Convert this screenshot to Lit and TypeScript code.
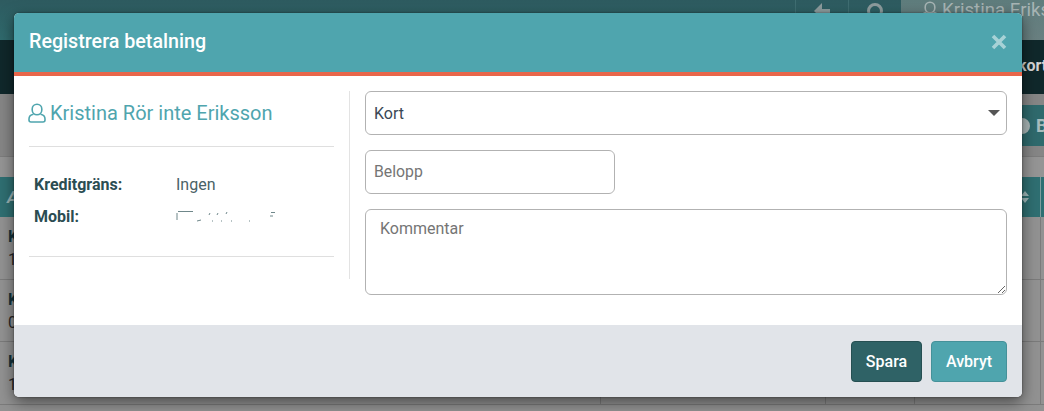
import { LitElement, html, css } from "lit";
import { customElement } from "lit/decorators.js";

@customElement("app-root")
export class AppRoot extends LitElement {
  static styles = css`
    :host {
      display: block;
      width: 1044px;
      height: 411px;
      overflow: hidden;
      position: relative;
      font-family: Roboto, "Liberation Sans", sans-serif;
      background: #929292;
    }
    .page { display: flex; flex-direction: column; height: 411px; }
    .topbar {
      height: 40px;
      background: linear-gradient(180deg, #2e5b60, #2f6a6d);
      display: flex;
      justify-content: flex-end;
      flex: none;
    }
    .topcell { width: 52px; border-left: 1px solid #3f6e72; display: flex; justify-content: center; color: #8d9c9d; padding-top: 2px; }
    .user {
      width: 123px; background: linear-gradient(180deg, #5f7d7d, #6a8081); color: #a8b5b5; font-size: 18.6px; white-space: nowrap;
      overflow: hidden; padding: 0 0 0 20px; display: flex; gap: 3px; align-items: flex-start; line-height: 20px;
    }
    .user svg { flex: none; margin-top: 1px; }
    .darkbar {
      height: 54px; flex: none; background: #10282b; color: #d4d4d4; box-sizing: border-box;
      font-size: 16px; font-weight: 700; padding-left: 1018px; white-space: nowrap; overflow: hidden; line-height: 52px;
    }
    .toolbar { height: 63px; flex: none; background: #868686; padding: 11px 0 0 1007px; box-sizing: border-box; border-bottom: 1px solid #7d7d7d; overflow: hidden; }
    .tool {
      width: 60px; height: 41px; background: #2f6a6d; color: #a8bcbd; font-weight: 700; font-size: 18px;
      display: flex; align-items: center; gap: 6px; padding-left: 7px; box-sizing: border-box;
    }
    .dot { width: 16px; height: 16px; border-radius: 50%; background: #a9b6b6; flex: none; }
    .band { height: 20px; flex: none; background: #959595; }
    .thead {
      height: 40px; flex: none; background: #2f6f72; color: #9ab2b3; font-weight: 700; font-size: 17px;
      font-style: italic; padding-left: 7px; line-height: 40px; box-sizing: border-box; position: relative;
    }
    .sort { position: absolute; left: 1020px; top: 13px; display: block; }
    .vline { position: absolute; left: 1040px; top: 0; bottom: 0; width: 1px; background: #7f9d9e; }
    .rows { flex: 1; background: #929292; }
    .row {
      height: 62.7px; border-bottom: 1px solid #7b7b7b; box-sizing: border-box; color: #262626;
      font-size: 16px; line-height: 23px; display: grid; grid-template-columns: 600px 225px 89px 126px 1fr;
    }
    .row > div { border-left: 1px solid #7b7b7b; }
    .row > div:first-child { border-left: none; padding: 8px 8px 0; }
    .row b { display: block; color: #14323a; }

    .modal {
      position: absolute;
      left: 14px;
      top: 13px;
      width: 1008px;
      height: 384px;
      border-radius: 5px;
      overflow: hidden;
      background: #fff;
      box-shadow: 0 5px 15px rgba(0, 0, 0, 0.5), 0 0 2px rgba(0, 0, 0, 0.5);
      display: flex;
      flex-direction: column;
    }
    .mhead {
      flex: none;
      background: #4fa5ae;
      border-bottom: 4px solid #e8664a;
      display: flex;
      align-items: center;
      justify-content: space-between;
      padding: 0 15px;
      color: #fff;
      box-sizing: border-box;
      height: 63px;
    }
    .title { font-size: 19.7px; font-weight: 500; line-height: 20px; margin-top: -2px; }
    .close { width: 16px; height: 16px; display: block; margin-top: -2px; opacity: 0.5; }
    .mbody { flex: 1; display: flex; padding: 15px 15px 0; min-height: 0; }
    .left { width: 321px; flex: none; height: 188px; border-right: 1px solid #e3e3e3; box-sizing: border-box; padding-right: 15px; }
    .name {
      color: #4fa5ae; font-size: 20px; line-height: 22px; padding-top: 11px; height: 22px; padding-bottom: 22px;
      display: flex; align-items: center; gap: 4px; border-bottom: 1px solid #dfdfdf; box-sizing: content-box;
    }
    .name svg { margin-left: -1px; flex: none; }
    .info {
      display: grid; grid-template-columns: 142px 1fr; row-gap: 12px; padding: 28px 5px 29px;
      border-bottom: 1px solid #dfdfdf; font-size: 16px; line-height: 20px; color: #4a6266;
    }
    .info b { color: #2b4d52; font-weight: 700; }
    .blur { display: flex; align-items: center; }
    .right { flex: 1; padding-left: 15px; display: flex; flex-direction: column; }
    .field {
      box-sizing: border-box; border: 1px solid #b2b2b2; border-radius: 6px; background: #fff;
      font-family: inherit; font-size: 16px;
    }
    .select { height: 44px; display: flex; align-items: center; justify-content: space-between; padding: 0 6px 0 8px; color: #3a4756; }
    .caret { width: 12px; height: 6px; display: block; }
    .amount { width: 250px; height: 44px; margin-top: 15px; padding: 0 8px 2px; font-size: 15.8px; color: #2b3a4a; outline: none; display: block; }
    .comment { width: 642px; height: 86px; margin-top: 15px; padding: 9px 14px; display: block; outline: none; resize: both; font-size: 16px; line-height: 20px; }
    .amount::placeholder, .comment::placeholder { color: #757575; opacity: 1; }
    .mfoot { height: 72px; flex: none; background: #e1e4e9; display: flex; justify-content: flex-end; align-items: center; gap: 9px; padding: 0 15px 0 0; }
    .btn {
      box-sizing: border-box; height: 41px; border-radius: 4px; color: #fff; font-family: inherit;
      font-size: 16px; font-weight: 500; display: flex; align-items: center; justify-content: center;
      border: 1px solid; padding: 0; margin-top: 1px;
    }
    .save { width: 71px; background: #2f6266; border-color: #264f52; }
    .cancel { width: 76px; background: #4fa5ae; border-color: #459199; }
  `;

  private row(k: string, n: string) {
    return html`<div class="row"><div><b>${k}</b>${n}</div><div></div><div></div><div></div><div></div></div>`;
  }

  render() {
    return html`
      <div class="page">
        <div class="topbar">
          <div class="topcell">
            <svg width="16" height="18" viewBox="0 0 16 18"><path d="M8 1 L0 9 L8 17 V12 H16 V7 H8 Z" fill="currentColor"></path></svg>
          </div>
          <div class="topcell">
            <svg width="18" height="18" viewBox="0 0 18 18"><circle cx="9" cy="9" r="6.5" fill="none" stroke="currentColor" stroke-width="3"></circle></svg>
          </div>
          <div class="user">
            <svg width="18" height="20" viewBox="0 0 18 20" fill="none" stroke="currentColor" stroke-width="1.6">
              <path d="M9 1.2 A4.8 4.8 0 0 1 13.8 6 V7 A4.8 4.8 0 0 1 4.2 7 V6 A4.8 4.8 0 0 1 9 1.2 Z"></path>
              <path d="M5.5 11.2 C3 11.6 1 13.4 1 16 V17 A2 2 0 0 0 3 19 H15 A2 2 0 0 0 17 17 V16 C17 13.4 15 11.6 12.5 11.2"></path>
            </svg>
            <span>Kristina Eriksson</span>
          </div>
        </div>
        <div class="darkbar">kort</div>
        <div class="toolbar">
          <div class="tool"><span class="dot"></span><span>B</span></div>
        </div>
        <div class="band"></div>
        <div class="thead">
          A
          <svg class="sort" width="10" height="14" viewBox="0 0 10 14"><path d="M5 1 L9 6 H1 Z M1 8 H9 L5 13 Z" fill="#9fb8b9"></path></svg>
          <span class="vline"></span>
        </div>
        <div class="rows">
          ${this.row("K", "1")}
          ${this.row("K", "0")}
          ${this.row("K", "1")}
        </div>
      </div>
      <div class="modal">
        <div class="mhead">
          <span class="title">Registrera betalning</span>
          <svg class="close" viewBox="0 0 16 16"><path d="M2 2 L14 14 M14 2 L2 14" stroke="#fff" stroke-width="3.6" fill="none"></path></svg>
        </div>
        <div class="mbody">
          <div class="left">
            <div class="name">
              <svg width="18" height="20" viewBox="0 0 18 20" fill="none" stroke="#4fa5ae" stroke-width="1.6">
                <path d="M9 1.2 A4.8 4.8 0 0 1 13.8 6 V7 A4.8 4.8 0 0 1 4.2 7 V6 A4.8 4.8 0 0 1 9 1.2 Z"></path>
                <path d="M5.5 11.2 C3 11.6 1 13.4 1 16 V17 A2 2 0 0 0 3 19 H15 A2 2 0 0 0 17 17 V16 C17 13.4 15 11.6 12.5 11.2"></path>
              </svg>
              <span>Kristina Rör inte Eriksson</span>
            </div>
            <div class="info">
              <b>Kreditgräns:</b><span>Ingen</span>
              <b>Mobil:</b><span class="blur">
                <svg width="104" height="14" viewBox="0 0 104 14" fill="none" stroke="#6f878a" stroke-width="1">
                  <path d="M1 3 V10 M2 1.5 H17 M21 11 L25 10 M34 3 L33 5 M42 3 L41 5 M51 2 L50 4 M36 11 H37 M45 11 H46 M55 11 H56 M73 11 H74 M95 2.5 H99 M94 6 H97"></path>
                </svg>
              </span>
            </div>
          </div>
          <div class="right">
            <div class="field select">
              <span>Kort</span>
              <svg class="caret" viewBox="0 0 12 6"><path d="M0 0 H12 L6 6 Z" fill="#555"></path></svg>
            </div>
            <input class="field amount" placeholder="Belopp" />
            <textarea class="field comment" placeholder="Kommentar"></textarea>
          </div>
        </div>
        <div class="mfoot">
          <button class="btn save">Spara</button>
          <button class="btn cancel">Avbryt</button>
        </div>
      </div>
    `;
  }
}
